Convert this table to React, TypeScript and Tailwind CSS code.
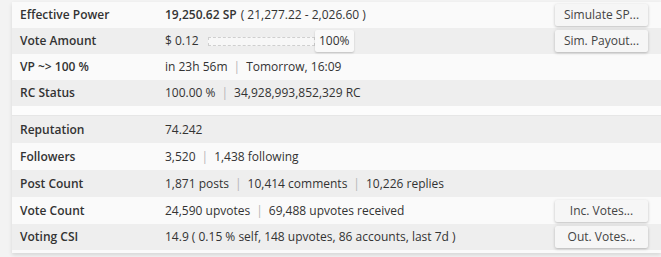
import React from 'react';

const Sep = () => <span className="mx-[6px] text-[#b5b5b5]">|</span>;

const Btn = ({ children }: { children: React.ReactNode }) => (
  <button className="h-[22px] w-[93px] rounded-[2px] bg-[#f6f6f6] text-[12px] text-[#444] shadow-[0_1px_3px_rgba(0,0,0,0.25)]">
    {children}
  </button>
);

type RowProps = {
  label: string;
  children: React.ReactNode;
  shade?: boolean;
  action?: string;
  h?: string;
};

const Row = ({ label, children, shade, action, h = 'h-[26px]' }: RowProps) => (
  <div className={`flex items-center pl-2 pr-[13px] ${h} ${shade ? 'bg-[#eeeeee]' : 'bg-[#fafafa]'}`}>
    <div className="w-[145px] font-semibold text-[#333]">{label}</div>
    <div className="flex flex-1 items-center text-[#333]">{children}</div>
    {action && <Btn>{action}</Btn>}
  </div>
);

const App = () => {
  return (
    <div
      className="h-[257px] w-[661px] overflow-hidden bg-[#f3f3f3] pl-3 pt-[2px] text-[12px]"
      style={{ fontFamily: '"Open Sans", "Noto Sans", sans-serif' }}
    >
      <div className="bg-[#fafafa] shadow-[0_2px_4px_rgba(0,0,0,0.12)]">
        <Row label="Effective Power" action="Simulate SP...">
          <span className="font-semibold">19,250.62 SP</span>
          <span className="ml-1">( 21,277.22 - 2,026.60 )</span>
        </Row>
        <Row label="Vote Amount" shade action="Sim. Payout...">
          <span>$ 0.12</span>
          <div className="ml-[9px] flex items-center">
            <div className="h-[9px] w-[107px] border border-dashed border-[#cfcfcf] bg-[#f7f7f7]" />
            <div className="flex h-[22px] w-[39px] items-center justify-center rounded-[2px] bg-[#f9f9f9] text-[12px] shadow-[0_1px_2px_rgba(0,0,0,0.2)]">
              100%
            </div>
          </div>
        </Row>
        <Row label="VP ~> 100 %">
          <span>in 23h 56m</span>
          <Sep />
          <span>Tomorrow, 16:09</span>
        </Row>
        <Row label="RC Status" shade>
          <span>100.00 %</span>
          <Sep />
          <span>34,928,993,852,329 RC</span>
        </Row>
        <div className="h-[10px] border-b border-[#e6e6e6] bg-[#fcfcfc]" />
        <Row label="Reputation" shade h="h-[27px]">
          <span>74.242</span>
        </Row>
        <Row label="Followers" h="h-[27px]">
          <span>3,520</span>
          <Sep />
          <span>1,438 following</span>
        </Row>
        <Row label="Post Count" shade h="h-[27px]">
          <span>1,871 posts</span>
          <Sep />
          <span>10,414 comments</span>
          <Sep />
          <span>10,226 replies</span>
        </Row>
        <Row label="Vote Count" action="Inc. Votes..." h="h-[27px]">
          <span>24,590 upvotes</span>
          <Sep />
          <span>69,488 upvotes received</span>
        </Row>
        <Row label="Voting CSI" shade action="Out. Votes..." h="h-[26px]">
          <span>14.9 ( 0.15 % self, 148 upvotes, 86 accounts, last 7d )</span>
        </Row>
        <div className="h-[3px] bg-[#fafafa]" />
      </div>
    </div>
  );
};

export default App;
